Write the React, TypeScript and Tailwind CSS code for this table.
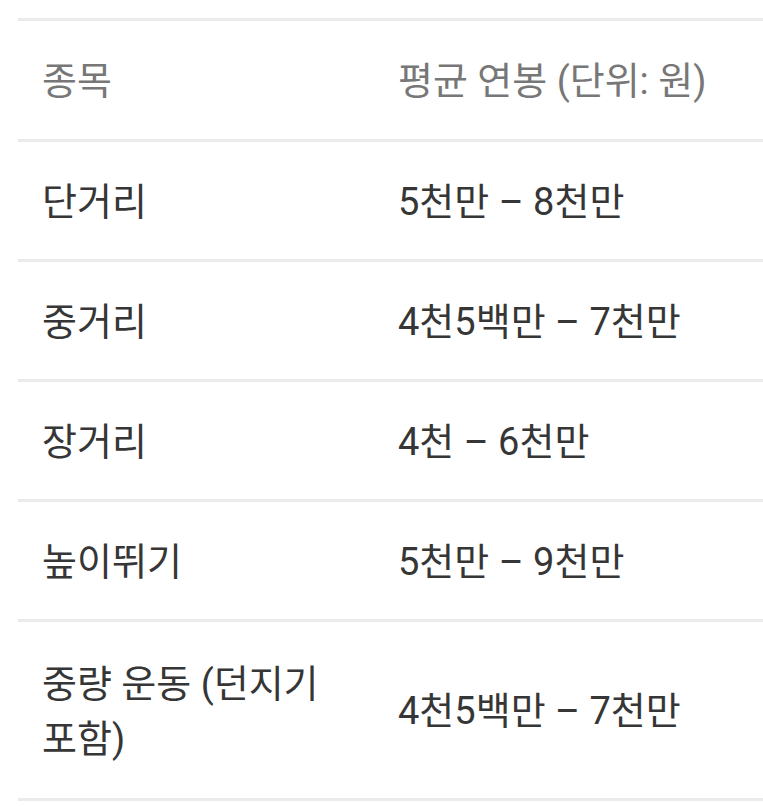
import React from "react";

const rows: [string, string][] = [
  ["단거리", "5천만 – 8천만"],
  ["중거리", "4천5백만 – 7천만"],
  ["장거리", "4천 – 6천만"],
  ["높이뛰기", "5천만 – 9천만"],
  ["중량 운동 (던지기 포함)", "4천5백만 – 7천만"],
];

export default function App() {
  return (
    <div
      className="w-[763px] h-[806px] bg-white overflow-hidden pt-[18px] pl-[18px]"
      style={{ fontFamily: 'Roboto, "Noto Sans CJK KR", sans-serif' }}
    >
      <div className="w-[800px] grid grid-cols-[356px_1fr] border-b-[3px] border-[#ebebeb]">
        <div className="border-t-[3px] border-[#ebebeb] pl-6 pr-6 pt-[3px] h-[121px] flex items-center text-[38px] leading-[55px] text-[#777777]">
          종목
        </div>
        <div className="border-t-[3px] border-[#ebebeb] pl-6 pt-[3px] h-[121px] flex items-center text-[38px] leading-[55px] text-[#777777]">
          평균 연봉 (단위: 원)
        </div>
        {rows.map(([a, b], i) => (
          <React.Fragment key={i}>
            <div
              className={`border-t-[3px] border-[#ebebeb] pl-6 pr-6 pt-[3px] flex items-center break-keep text-[38px] leading-[55px] text-[#363636] ${
                i === rows.length - 1 ? "h-[179px]" : "h-[120px]"
              }`}
            >
              {a}
            </div>
            <div
              className={`border-t-[3px] border-[#ebebeb] pl-6 pt-[3px] flex items-center text-[38px] leading-[55px] text-[#363636] ${
                i === rows.length - 1 ? "h-[179px]" : "h-[120px]"
              }`}
            >
              {b}
            </div>
          </React.Fragment>
        ))}
      </div>
    </div>
  );
}
